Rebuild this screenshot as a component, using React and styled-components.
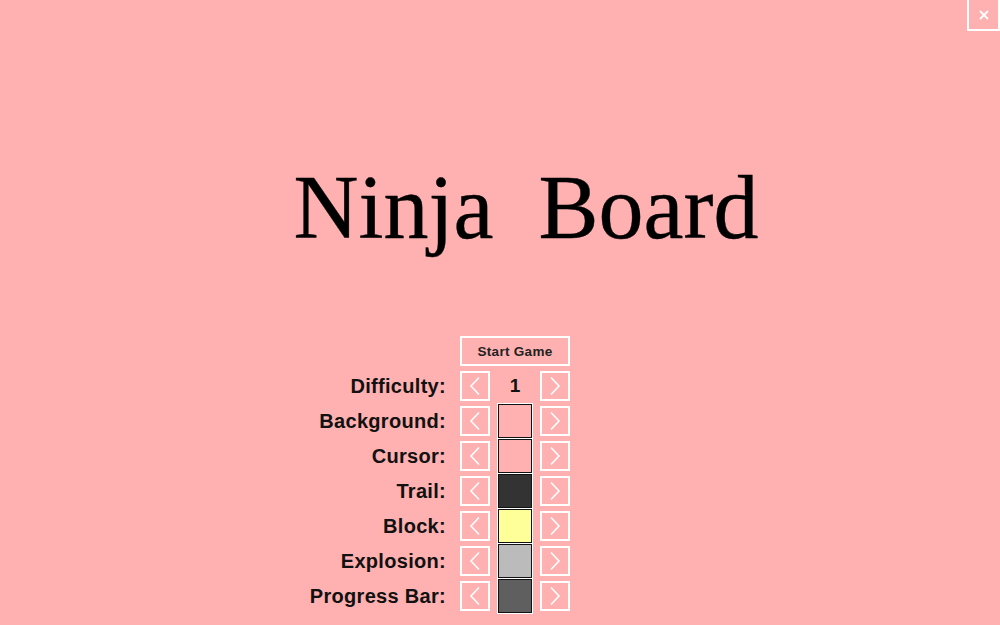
import React, { useState } from "react";
import styled, { createGlobalStyle } from "styled-components";

const GlobalStyle = createGlobalStyle`
    html, body {
        margin: 0;
        padding: 0;
        background-color: #ffb0b0;
        overflow: hidden;
    }
`;

const Page = styled.div`
    position: relative;
    width: 1000px;
    height: 625px;
    background-color: #ffb0b0;
`;

const CloseBtn = styled.button`
    position: absolute;
    top: -2px;
    right: 0;
    width: 33px;
    height: 33px;
    box-sizing: border-box;
    border: 2px solid #fff;
    background: transparent;
    padding: 0;
    display: flex;
    align-items: center;
    justify-content: center;
    cursor: pointer;
`;

const Title = styled.h1`
    margin: 0;
    padding-top: 158px;
    padding-left: 52px;
    text-align: center;
    font-family: "Liberation Serif", "Times New Roman", serif;
    font-weight: normal;
    font-size: 90px;
    line-height: 100px;
    white-space: pre;
    color: #000;
    -webkit-text-stroke: 0.4px #000;
`;

const Menu = styled.div`
    display: grid;
    grid-template-columns: 200px 30px 50px 30px;
    grid-auto-rows: 30px;
    row-gap: 5px;
    margin-top: 78px;
    margin-left: 260px;
    font-family: "Liberation Sans", Arial, sans-serif;
`;

const Label = styled.div`
    grid-column: 1;
    padding-right: 14px;
    text-align: right;
    font-size: 20px;
    font-weight: bold;
    letter-spacing: 0.3px;
    line-height: 30px;
    color: #111;
`;

const StartButton = styled.button`
    grid-column: 2 / span 3;
    box-sizing: border-box;
    border: 2px solid #fff;
    background: transparent;
    font-family: "Liberation Sans", Arial, sans-serif;
    font-size: 13.5px;
    font-weight: bold;
    color: #222;
    letter-spacing: 0.3px;
    padding: 0;
    cursor: pointer;
`;

const ArrowBtn = styled.button`
    box-sizing: border-box;
    width: 30px;
    height: 30px;
    border: 2px solid #fff;
    background: transparent;
    padding: 0;
    display: flex;
    align-items: center;
    justify-content: center;
    cursor: pointer;
`;

const Value = styled.div`
    display: flex;
    align-items: center;
    justify-content: center;
    font-size: 19px;
    font-weight: bold;
    color: #111;
`;

const Swatch = styled.div`
    align-self: center;
    justify-self: center;
    width: 34px;
    height: 34px;
    box-sizing: border-box;
    border: 1px solid #111;
    box-shadow: 0 0 0 1px #fff;
    background-color: ${(p) => p.$color};
`;

function Chevron({ dir }) {
    const pts = dir === "left" ? "12,2.5 4,11 12,19.5" : "4,2.5 12,11 4,19.5";
    return (
        <svg width="16" height="22" viewBox="0 0 16 22">
            <polyline points={pts} fill="none" stroke="#fff" strokeWidth="1.6" />
        </svg>
    );
}

const colorRows = [
    { name: "Background", color: "#ffb0b0" },
    { name: "Cursor", color: "#ffb0b0" },
    { name: "Trail", color: "#333333" },
    { name: "Block", color: "#ffff99" },
    { name: "Explosion", color: "#bbbbbb" },
    { name: "Progress Bar", color: "#5f5f5f" },
];

export default function App() {
    const [difficulty, setDifficulty] = useState(1);

    return (
        <Page>
            <GlobalStyle />
            <CloseBtn aria-label="close">
                <svg width="12" height="12" viewBox="0 0 12 12">
                    <path d="M2 2 L10 10 M10 2 L2 10" stroke="#fff" strokeWidth="1.8" />
                </svg>
            </CloseBtn>
            <Title>{"Ninja  Board"}</Title>
            <Menu>
                <div />
                <StartButton>Start Game</StartButton>

                <Label>Difficulty:</Label>
                <ArrowBtn onClick={() => setDifficulty((d) => Math.max(1, d - 1))}>
                    <Chevron dir="left" />
                </ArrowBtn>
                <Value>{difficulty}</Value>
                <ArrowBtn onClick={() => setDifficulty((d) => d + 1)}>
                    <Chevron dir="right" />
                </ArrowBtn>

                {colorRows.map((row) => (
                    <React.Fragment key={row.name}>
                        <Label>{row.name}:</Label>
                        <ArrowBtn>
                            <Chevron dir="left" />
                        </ArrowBtn>
                        <Swatch $color={row.color} />
                        <ArrowBtn>
                            <Chevron dir="right" />
                        </ArrowBtn>
                    </React.Fragment>
                ))}
            </Menu>
        </Page>
    );
}
